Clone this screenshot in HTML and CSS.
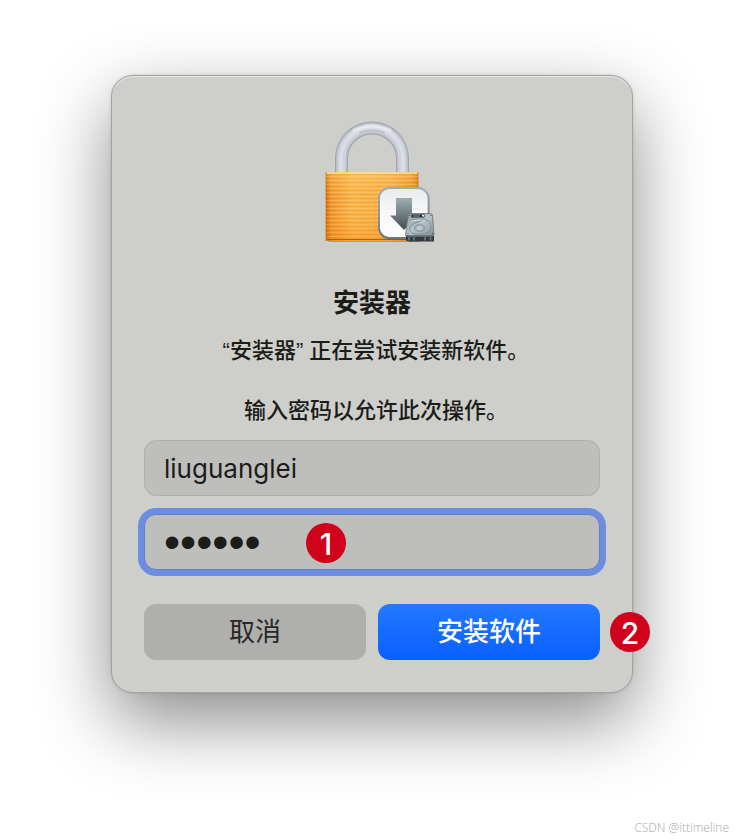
FILE: index.html
```html
<!DOCTYPE html>
<html lang="zh-CN">
<head>
    <meta charset="UTF-8">
    <meta name="viewport" content="width=device-width, initial-scale=1.0">
    <title>安装器</title>
    <link rel="stylesheet" href="styles.css">
</head>
<body>

    <form class="dialog" onsubmit="return false">
        <!-- Lock with the installer package on top -->
        <svg class="lock-icon" viewBox="0 0 120 140" aria-hidden="true">
            <defs>
                <linearGradient id="bodyShade" x1="0" x2="1" y1="0" y2="0">
                    <stop offset="0" stop-color="#d06c00"/>
                    <stop offset=".06" stop-color="#f0962c"/>
                    <stop offset=".28" stop-color="#ffb74f"/>
                    <stop offset=".7" stop-color="#fbae48"/>
                    <stop offset=".93" stop-color="#ed9128"/>
                    <stop offset="1" stop-color="#d37409"/>
                </linearGradient>
                <linearGradient id="bodyFade" x1="0" x2="0" y1="0" y2="1">
                    <stop offset="0" stop-color="#ffe08a" stop-opacity=".3"/>
                    <stop offset=".5" stop-color="#f9a035" stop-opacity="0"/>
                    <stop offset="1" stop-color="#e97900" stop-opacity=".3"/>
                </linearGradient>
                <linearGradient id="tile" x1="0" x2="0" y1="0" y2="1">
                    <stop offset="0" stop-color="#e9eaed"/>
                    <stop offset=".5" stop-color="#f8f8fa"/>
                    <stop offset="1" stop-color="#ffffff"/>
                </linearGradient>
                <linearGradient id="rim" x1="0" x2="0" y1="0" y2="1">
                    <stop offset="0" stop-color="#9fadb3"/>
                    <stop offset="1" stop-color="#687980"/>
                </linearGradient>
                <linearGradient id="arrow" x1="0" x2="0" y1="0" y2="1">
                    <stop offset="0" stop-color="#9db0b5"/>
                    <stop offset="1" stop-color="#454c50"/>
                </linearGradient>
                <linearGradient id="disk" x1="0" x2="1" y1="0" y2="1">
                    <stop offset="0" stop-color="#8c999f"/>
                    <stop offset=".5" stop-color="#b9c4c8"/>
                    <stop offset="1" stop-color="#84939a"/>
                </linearGradient>
                <pattern id="lines" width="4" height="4" patternUnits="userSpaceOnUse">
                    <rect width="4" height="1" fill="#ffd584" opacity=".4"/>
                    <rect y="2" width="4" height="1" fill="#e27d0b" opacity=".25"/>
                </pattern>
            </defs>

            <path d="M15 128h90l4 2H17z" fill="#555" opacity=".4"/>
            <!-- shackle -->
            <g fill="none">
                <path d="M29.500 62V46.500a30.500 30.500 0 0 1 61 0V62" stroke="#9ea5b0" stroke-width="13"/>
                <path d="M29.500 62V46.500a30.500 30.500 0 0 1 61 0V62" stroke="#bcc1ca" stroke-width="11"/>
                <path d="M29.500 62V46.500a30.500 30.500 0 0 1 61 0V62" stroke="#ced1d9" stroke-width="8"/>
                <path d="M29 62V46.500a31 31 0 0 1 62 0V62" stroke="#dadde3" stroke-width="4"/>
                <path d="M42 18.500q18-9 36 0" stroke="#f1f2f6" stroke-width="3" stroke-linecap="round" opacity=".6"/>
                <path d="M48 20.500q12-4 24 0" stroke="#9da4b0" stroke-width="2" stroke-linecap="round" opacity=".35"/>
            </g>
            <!-- body -->
            <path d="M14 60h92v67q0 2-2 2H16q-2 0-2-2z" fill="url(#bodyShade)"/>
            <path d="M14 62h92v65H14z" fill="url(#lines)"/>
            <path d="M14 60h92v69H14z" fill="url(#bodyFade)"/>
            <path d="M14 61h92" stroke="#ffe29a" stroke-width="1.4"/>
            <path d="M14 60v69M106 60v69" stroke="#bb6504" opacity=".6"/>
            <path d="M15 127.500h90" stroke="#b0620a"/>
            <!-- installer tile -->
            <rect x="66.500" y="76" width="51" height="51.500" rx="11" fill="#333" opacity=".35"/>
            <rect x="67" y="76" width="49.500" height="50" rx="10.500" fill="url(#tile)" stroke="url(#rim)" stroke-width="1.800"/>
            <path d="M84 86h16v17.500h6L92 118 78 103.500h6z" fill="url(#arrow)"/>
            <!-- hard disk -->
            <path d="M94 126h28v4H96z" fill="#222" opacity=".45"/>
            <path d="M97.500 101.500h21q1.500 0 2 2l1.500 20H93.500l2.500-20q.3-2 1.500-2z" fill="url(#disk)" stroke="#647279" stroke-width=".8"/>
            <path d="M94 123.500h28v4.500q0 1-1 1H95q-1 0-1-1z" fill="#343b3e"/>
            <path d="M95 124h26" stroke="#82959d"/>
            <path d="M97 125v3.500M102 125v3.500M113 125v3.500M118.500 125v3.500" stroke="#6f7b80" stroke-width="1.500"/>
            <path d="M99.500 102.500h13v3h-13z" fill="#20272b"/>
            <path d="M101 104h7" stroke="#8ba4ae"/>
            <circle cx="111" cy="103.800" r="1" fill="#fff"/>
            <path d="M99 108q8-2 14-.5t6 8q0 6-8 6.500-11 1-13-3-2-5 5-8 4-1.500 8-3" fill="none" stroke="#7b8b92" stroke-width=".9"/>
            <path d="M99 109q9-2 14-.5" fill="none" stroke="#e4edef" stroke-width=".7"/>
            <ellipse cx="107.500" cy="116" rx="4.800" ry="3.300" fill="#aab8bd" stroke="#7b8b92" stroke-width=".9"/>
            <ellipse cx="107.500" cy="116" rx="2" ry="1.300" fill="none" stroke="#dce5e8" stroke-width=".7"/>
            <path d="M97.500 103v1M119 103v1M96 121v1M120.500 121v1" stroke="#3d494e"/>
        </svg>

        <h1 class="title">安装器</h1>
        <p class="message">“安装器” 正在尝试安装新软件。</p>
        <p class="message">输入密码以允许此次操作。</p>

        <div class="field">
            <input type="text" class="input" id="username" aria-label="用户名" value="liuguanglei">
        </div>
        <div class="field">
            <input type="password" class="input input-active" id="password" aria-label="密码" value="123456">
            <span class="badge badge-password">1</span>
        </div>

        <div class="buttons">
            <button type="button" class="btn">取消</button>
            <button type="submit" class="btn btn-primary">安装软件</button>
            <span class="badge badge-install">2</span>
        </div>
    </form>

    <span class="watermark">CSDN @ittimeline</span>

</body>
</html>
```

FILE: styles.css
```css
* {
    box-sizing: border-box;
}
body {
    margin: 0;
    min-height: 100vh;
    padding: 75px 20px 32px;
    background-color: #fff;
    color: #1c1c1b;
    font-family: Inter, "Noto Sans CJK SC", sans-serif;
}
.dialog {
    display: flex;
    flex-direction: column;
    align-items: center;
    width: 100%;
    max-width: 522px;
    margin: 0 auto;
    padding: 36px 32px 32px;
    background-color: #cecfca;
    border: 1px solid #a3a4a1;
    border-radius: 22px;
    box-shadow: inset 0 1px 1px #e9e9e6, 0 0 3px rgba(0, 0, 0, 0.15), 0 28px 72px rgba(0, 0, 0, 0.46);
}
.lock-icon {
    width: 120px;
    height: 140px;
    overflow: visible;
}
.title {
    margin: 33px 0 15px;
    font-size: 26px;
    line-height: 36px;
    font-weight: 700;
}
.message {
    margin: 0 0 30px;
    font-family: "Liberation Sans", "Noto Sans CJK SC", sans-serif;
    font-size: 22px;
    line-height: 30px;
    font-weight: 500;
    text-indent: 8px;
}
.message + .message {
    margin-bottom: 14px;
}
.field {
    position: relative;
    width: 100%;
    margin-bottom: 18px;
}
.input {
    display: block;
    width: 100%;
    height: 56px;
    padding: 0 19px;
    background-color: #bebebc;
    border: 1px solid #b0b0ae;
    border-radius: 12px;
    color: #1c1c1b;
    font-family: Inter, sans-serif;
    font-size: 26px;
    outline: none;
}
.input-active {
    border-color: #627fca;
    box-shadow: 0 0 0 6px #6d8de0;
    font-family: "Liberation Sans", sans-serif;
    font-size: 46px;
}
.buttons {
    position: relative;
    display: flex;
    gap: 12px;
    width: 100%;
    margin-top: 16px;
}
.btn {
    flex: 1;
    height: 56px;
    padding: 0 0 6px;
    border: none;
    border-radius: 12px;
    background-color: #afafad;
    color: #282827;
    font-family: Inter, "Noto Sans CJK SC", sans-serif;
    font-size: 26px;
}
.btn-primary {
    background: linear-gradient(#2379ff, #095fff);
    color: #fff;
    font-weight: 500;
}
.badge {
    position: absolute;
    width: 40px;
    height: 40px;
    border-radius: 50%;
    background-color: #d0021b;
    color: #fff;
    font-size: 30px;
    line-height: 42px;
    font-weight: 500;
    text-align: center;
}
.badge-password {
    top: 9px;
    left: 162px;
}
.badge-install {
    top: 8px;
    right: -50px;
}
.watermark {
    position: absolute;
    right: 15px;
    bottom: 4px;
    color: #a8a8a8;
    font-family: "Open Sans", sans-serif;
    font-size: 12px;
    line-height: 16px;
    font-weight: 300;
}
```
